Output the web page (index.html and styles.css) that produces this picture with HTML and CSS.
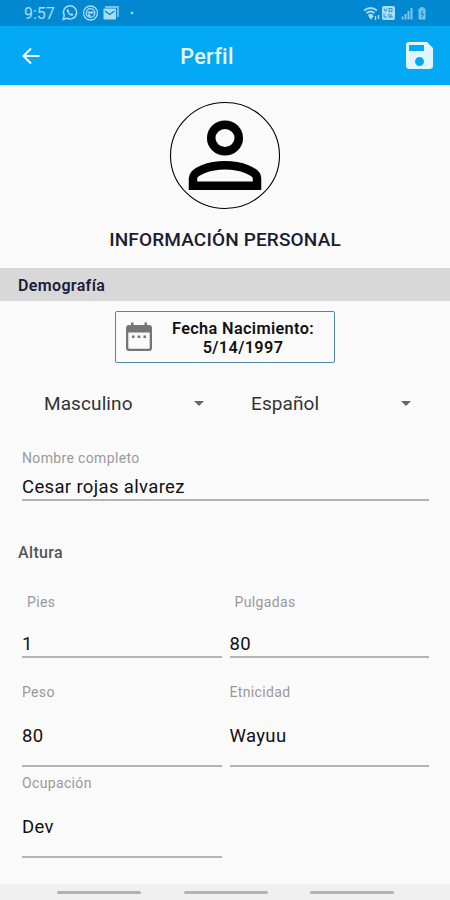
FILE: index.html
```html
<!DOCTYPE html>
<html lang="es">
    <head>
        <meta charset="UTF-8">
        <meta name="viewport" content="width=device-width, initial-scale=1.0">
        <title>Perfil</title>
        <link rel="stylesheet" href="styles.css">
    </head>
    <body>
        <div class="status-bar">
            <span class="time">9:57</span>
            <svg class="status-left" width="74" height="18" viewBox="0 0 74 18" fill="none" stroke="currentColor">
                <!-- chat -->
                <path d="M2.200 15.300l1-3.700a6.600 6.600 0 1 1 2.600 2.600z" stroke-width="1.500"/>
                <path d="M6 5.500c-1 2.500 2.500 6.500 5.500 6.300l1-1.600-1.800-1-1 .8c-1-.5-1.800-1.300-2.200-2.200l.7-.9-.8-1.600z" fill="currentColor" stroke="none"/>
                <!-- messenger -->
                <circle cx="29.500" cy="9" r="7" stroke-width="1.300"/>
                <circle cx="29.500" cy="9" r="4.300" stroke-width="1.300"/>
                <path d="M26.500 8.500h6M27 10.500l2.500 2" stroke-width="1.800"/>
                <!-- mail -->
                <path d="M45 4V3h12v9h-1" stroke-width="1.800" opacity=".7"/>
                <rect x="42.500" y="4.500" width="12.500" height="11" rx="1" fill="currentColor" stroke="none"/>
                <path d="M44 7l4.700 3.500L53.500 7" stroke="#0288d1" stroke-width="1.400"/>
                <circle cx="71" cy="9" r="1.300" fill="currentColor" stroke="none"/>
            </svg>
            <svg class="status-right" width="66" height="18" viewBox="0 0 66 18" fill="none" stroke="currentColor">
                <!-- wifi -->
                <path d="M1 6.500q6.500-5 13 0M3.500 9q4-3 8 0M5.500 11.500q2-1.500 4 0" stroke-width="1.800"/>
                <path d="M8 14.500l-1.500-2h3zM12.500 12v4M15.500 11v4" fill="currentColor" stroke-width="1.400"/>
                <!-- volte -->
                <rect x="19" y="2" width="13" height="14" rx="2" fill="currentColor" stroke="none"/>
                <path d="M21 4.500l1.500 3L24 4.500M26 4.500h3v3h-3zM21 9.500v3.500h3M26 9.500v3.500h4M28 10v3" stroke="#0288d1" stroke-width=".8"/>
                <path d="M39.500 15.500v-3M42.500 15.500V10M45.500 15.500V7M48.500 15.500V4" stroke-width="2" opacity=".75"/>
                <!-- battery -->
                <path d="M55.500 4.500h2V3h3v1.500h2v11h-7z" fill="currentColor" stroke="none" opacity=".7"/>
                <path d="M60 6.500l-2 3.500h2.500l-2 3.500" stroke="#0288d1" stroke-width="1"/>
            </svg>
        </div>
        <div class="app-bar">
            <svg class="back" width="20" height="18" viewBox="0 0 20 18" fill="none" stroke="#fff" stroke-width="2">
                <path d="M18.500 9H2.500M10 1.500L2.500 9l7.500 7.500"/>
            </svg>
            <h1 class="title">Perfil</h1>
            <svg class="save" width="27" height="27" viewBox="3 3 18 18">
                <path fill="#e1f5fe" d="M17 3H5a2 2 0 0 0-2 2v14c0 1.100.9 2 2 2h14c1.100 0 2-.9 2-2V7l-4-4zm-5 16a3 3 0 1 1 0-6 3 3 0 0 1 0 6zm3-10H5V5h10v4z"/>
            </svg>
        </div>
        <div class="content">
            <div class="profile">
                <svg class="avatar" width="112" height="109" viewBox="0 0 112 109" fill="none" stroke="#000">
                    <ellipse cx="56" cy="54.500" rx="54.500" ry="53" stroke-width="1.100"/>
                    <ellipse cx="56" cy="37" rx="13.800" ry="13.300" stroke-width="8.500"/>
                    <path d="M24 84.800v-7.500c0-7 16-13 32-13s32 6 32 13v7.500z" stroke-width="8.500"/>
                </svg>
                <h2 class="name">INFORMACIÓN PERSONAL</h2>
            </div>
            <div class="section">Demografía</div>
            <div class="birth-date">
                <svg class="calendar" width="28" height="30" viewBox="0 0 28 30">
                    <path fill="#757575" d="M4 3h2V.5h2.500V3h11V.5H22V3h2a3 3 0 0 1 3 3v20a3 3 0 0 1-3 3H4a3 3 0 0 1-3-3V6a3 3 0 0 1 3-3zm-.7 7.500V26c0 .5.300.8.800.8h19.800c.5 0 .8-.3.800-.8V10.500z"/>
                    <path fill="#757575" d="M7 13.500h2.500V16H7zM12.700 13.500h2.500V16h-2.500zM18.500 13.500H21V16h-2.500z"/>
                </svg>
                <div class="date-text">Fecha Nacimiento:<br>5/14/1997</div>
            </div>
            <div class="selects">
                <div class="select">
                    <span class="option">Masculino</span>
                    <span class="arrow"></span>
                </div>
                <div class="select">
                    <span class="option">Español</span>
                    <span class="arrow"></span>
                </div>
            </div>
            <div class="field field-name">
                <span class="label">Nombre completo</span>
                <span class="value">Cesar rojas alvarez</span>
            </div>
            <h3 class="subtitle">Altura</h3>
            <div class="fields">
                <div class="field field-height">
                    <span class="label">Pies</span>
                    <span class="value">1</span>
                </div>
                <div class="field field-height">
                    <span class="label">Pulgadas</span>
                    <span class="value">80</span>
                </div>
                <div class="field field-tall">
                    <span class="label">Peso</span>
                    <span class="value">80</span>
                </div>
                <div class="field field-tall">
                    <span class="label">Etnicidad</span>
                    <span class="value">Wayuu</span>
                </div>
                <div class="field field-last">
                    <span class="label">Ocupación</span>
                    <span class="value">Dev</span>
                </div>
            </div>
        </div>
        <div class="nav-bar">
            <span class="nav-line"></span>
            <span class="nav-line"></span>
            <span class="nav-line"></span>
        </div>
    </body>
</html>
```
FILE: styles.css
```css
* {
    box-sizing: border-box;
}

body {
    margin: 0;
    height: 900px;
    display: flex;
    flex-direction: column;
    overflow: hidden;
    background-color: #fafafa;
    color: #111;
    font-family: Roboto, "Liberation Sans", sans-serif;
    letter-spacing: 0.35px;
}

h1, h2, h3 {
    margin: 0;
}

.status-bar {
    height: 26px;
    padding: 0 21px 0 24px;
    display: flex;
    align-items: center;
    background-color: #0288d1;
    color: #a9dcf6;
}

.time {
    width: 37px;
    font-size: 16px;
    line-height: 26px;
    padding-top: 2px;
    letter-spacing: 0;
}

.status-right {
    margin-left: auto;
}

.app-bar {
    height: 59px;
    padding: 0 17px 0 21px;
    display: flex;
    align-items: center;
    background-color: #03a9f4;
}

.title {
    flex: 1;
    padding: 2px 33px 0 0;
    text-align: center;
    color: #e9f8ff;
    font-size: 21.500px;
    font-weight: 500;
}

.content {
    flex: 1;
}

.profile {
    height: 183px;
    padding-top: 16px;
    display: flex;
    flex-direction: column;
    align-items: center;
}

.name {
    margin-top: 17px;
    color: #1c1c30;
    font-size: 19px;
    line-height: 26px;
    font-weight: 500;
    letter-spacing: 0.15px;
}

.section {
    height: 33px;
    padding-left: 18px;
    background-color: #d8d8d8;
    color: #1c1c38;
    font-size: 16px;
    line-height: 35px;
    font-weight: 600;
}

.birth-date {
    width: 220px;
    height: 52px;
    margin: 10px auto 0;
    padding: 0 16px 0 9px;
    display: flex;
    align-items: center;
    justify-content: space-between;
    border: 1.500px solid #54879b;
    border-radius: 2px;
}

.date-text {
    width: 150px;
    text-align: center;
    font-size: 16.300px;
    line-height: 19px;
    font-weight: 600;
    padding-top: 2px;
}

.selects {
    height: 81px;
    padding: 0 38px 0 44px;
    display: grid;
    grid-template-columns: 160px 160px;
    column-gap: 47px;
    align-items: center;
}

.select {
    display: flex;
    align-items: center;
    justify-content: space-between;
}

.option {
    font-size: 19px;
    line-height: 24px;
    color: #333;
    letter-spacing: 0.1px;
}

.arrow {
    border: 5.500px solid transparent;
    border-top-color: #666;
    border-bottom: 0;
}

.field {
    display: flex;
    flex-direction: column;
    border-bottom: 2px solid #b4b4b4;
}

.label {
    color: #999;
    font-size: 14px;
    line-height: 18px;
}

.value {
    font-size: 18.500px;
    line-height: 24px;
}

.field-name {
    height: 52px;
    margin: 5px 21px 0 22px;
    gap: 8px;
}

.subtitle {
    margin: 41px 0 0 18px;
    color: #555;
    font-size: 16px;
    line-height: 22px;
    font-weight: 500;
}

.fields {
    margin: 29px 21px 0 22px;
    display: grid;
    grid-template-columns: 1fr 1fr;
    column-gap: 8px;
}

.field-height {
    height: 65px;
    gap: 21px;
}

.field-height .label {
    padding-left: 5px;
}

.field-tall {
    height: 84px;
    margin-top: 25px;
    gap: 23px;
}

.field-last {
    height: 84px;
    margin-top: 7px;
    gap: 23px;
}

.nav-bar {
    height: 16px;
    padding: 7px 56px 0 57px;
    display: flex;
    justify-content: space-between;
    background-color: #f0f0f0;
}

.nav-line {
    width: 84px;
    height: 3px;
    border-radius: 2px;
    background-color: #b2b2b2;
}
```
